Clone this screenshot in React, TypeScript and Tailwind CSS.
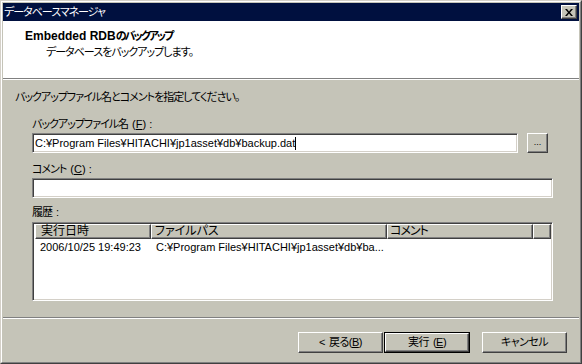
import React from "react";

const raised =
  "border border-t-white border-l-white border-r-[#404040] border-b-[#404040] shadow-[inset_-1px_-1px_0_#808080] bg-[#c5c4b8]";
const sunken =
  "border border-t-[#808080] border-l-[#808080] border-r-white border-b-white shadow-[inset_1px_1px_0_#404040,inset_-1px_-1px_0_#d4d0c8] bg-white";
const jpText = "text-[11px] leading-[14px] tracking-[-1px]";

const Key = ({ k }: { k: string }) => (
  <span className="ml-[4px] tracking-normal">
    (<u>{k}</u>) :
  </span>
);

const App = () => {
  return (
    <div className="w-[582px] h-[364px] border border-t-[#d4d0c8] border-l-[#d4d0c8] border-r-[#404040] border-b-[#404040] font-['Liberation_Sans','Noto_Sans_CJK_JP',sans-serif] [font-feature-settings:'palt'] text-black">
      <div className="h-full flex flex-col p-px bg-[#c5c4b8] border border-t-white border-l-white border-r-[#808080] border-b-[#808080]">
        {/* Title bar */}
        <div className="h-[18px] bg-[#00103f] flex items-center justify-between pl-px pr-[2px]">
          <span className={`text-white ${jpText}`}>データベースマネージャ</span>
          <div className={`w-4 h-[14px] flex items-center justify-center ${raised}`}>
            <svg width="8" height="7" viewBox="0 0 8 7">
              <path d="M0 0h2l2 2.5L6 0h2L5 3.5 8 7H6L4 4.5 2 7H0l3-3.5z" fill="#000" />
            </svg>
          </div>
        </div>

        {/* Header */}
        <div className="h-[57px] bg-white pl-[22px] pt-[8px]">
          <div className="text-[12px] leading-[14px] font-bold">
            Embedded RDB<span className="text-[11px] tracking-[-2px]">のバックアップ</span>
          </div>
          <div className={`mt-[2px] pl-[21px] ${jpText}`}>データベースをバックアップします。</div>
        </div>
        <div className="h-px bg-[#808080]" />
        <div className="h-px bg-white" />

        {/* Body */}
        <div className="flex-1 flex flex-col pl-[12px] pt-[10px]">
          <div className={jpText}>バックアップファイル名とコメントを指定してください。</div>
          <div className="flex flex-col pl-[17px] pr-[26px]">
            <div className={`mt-[13px] ${jpText}`}>
              バックアップファイル名<Key k="F" />
            </div>
            <div className="mt-[2px] flex items-center">
              <div className={`w-[486px] h-[20px] flex items-center pl-[2px] ${sunken}`}>
                <span className="text-[11px] leading-[13px]">C:¥Program Files¥HITACHI¥jp1asset¥db¥backup.dat</span>
                <span className="w-px h-[13px] bg-black" />
              </div>
              <div className={`ml-[9px] w-[21px] h-[20px] flex items-center justify-center ${raised}`}>
                <span className="text-[9px] leading-[9px] -mt-[2px]">...</span>
              </div>
            </div>

            <div className={`mt-[9px] ${jpText}`}>
              コメント<Key k="C" />
            </div>
            <div className={`mt-[2px] h-[20px] ${sunken}`} />

            <div className={`mt-[7px] ${jpText}`}>
              履歴<span className="ml-[4px]">:</span>
            </div>
            <div className={`mt-[3px] h-[79px] p-px flex flex-col ${sunken}`}>
              <div className="flex h-[15px] ml-px text-[12px] leading-[13px]">
                <div className={`w-[116px] pl-[5px] ${raised}`}>実行日時</div>
                <div className={`w-[236px] pl-[3px] ${raised}`}>ファイルパス</div>
                <div className={`w-[146px] pl-[2px] tracking-[-1px] ${raised}`}>コメント</div>
                <div className={`flex-1 ${raised}`} />
              </div>
              <div className="flex h-[16px] items-center ml-px text-[11px] leading-[14px]">
                <div className="w-[116px] pl-[5px]">2006/10/25 19:49:23</div>
                <div className="w-[236px] pl-[5px]">C:¥Program Files¥HITACHI¥jp1asset¥db¥ba...</div>
              </div>
            </div>
          </div>
        </div>

        {/* Footer */}
        <div className="h-px bg-[#808080]" />
        <div className="h-[43px] border-t border-white flex justify-end items-start pt-[13px] pr-[12px] text-[11px] tracking-[-0.5px]">
          <div className={`w-[85px] h-[21px] flex items-center justify-center ${raised}`}>
            &lt;<span className="ml-[4px]">戻る(<u>B</u>)</span>
          </div>
          <div className="ml-px w-[86px] h-[21px] border border-black">
            <div className={`h-full flex items-center justify-center ${raised}`}>
              実行<span className="ml-[4px]">(<u>E</u>)</span>
            </div>
          </div>
          <div className={`ml-[12px] w-[85px] h-[21px] flex items-center justify-center ${raised}`}>
            キャンセル
          </div>
        </div>
      </div>
    </div>
  );
};

export default App;
